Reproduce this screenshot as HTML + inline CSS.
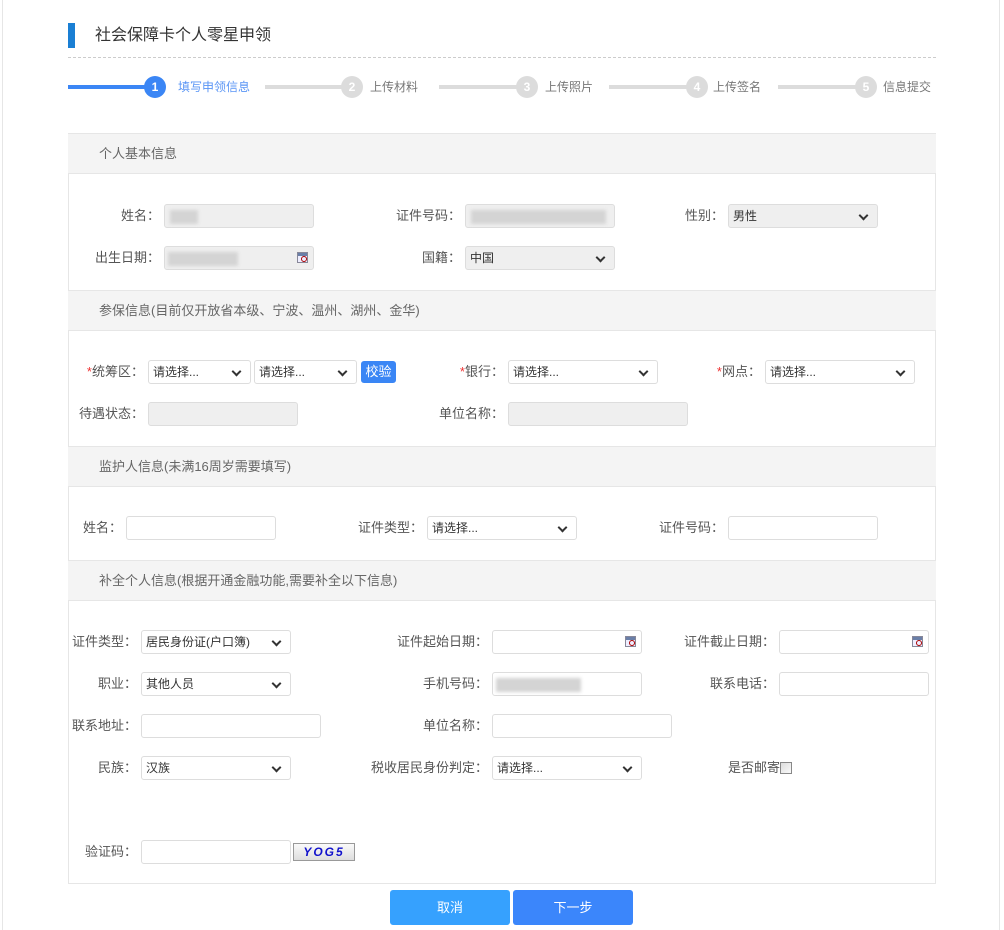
<!DOCTYPE html>
<html><head><meta charset="utf-8">
<style>
*{box-sizing:border-box;margin:0;padding:0}
body{width:1004px;height:930px;background:#fff;font-family:"Liberation Sans","Noto Sans CJK SC",sans-serif;color:#555;position:relative;overflow:hidden;font-size:13px}
.a{position:absolute}
.frame{left:2px;top:0;width:998px;height:930px;border-left:1px solid #e6e6e6;border-right:1px solid #e6e6e6}
.lb{position:absolute;text-align:right;font-size:13px;line-height:24px;color:#555;white-space:nowrap}
.in{position:absolute;height:24px;border:1px solid #ddd;border-radius:3px;background:#fff;font-size:12px;line-height:22px;padding-left:4px;color:#333}
.gr{background:#efefef}
.sel::after{content:"";position:absolute;right:10px;top:7px;width:5px;height:5px;border-right:2px solid #333;border-bottom:2px solid #333;transform:rotate(45deg)}
.cal::after{content:"";position:absolute;right:5px;top:5px;width:11px;height:11px;border:1px solid #889;background:linear-gradient(#6a7fa8 0 3px,#eef 3px);box-sizing:border-box}
.cal::before{content:"";position:absolute;right:6px;top:9px;width:4px;height:4px;border-radius:50%;border:1px solid #a00;z-index:2}
.sec{position:absolute;left:68px;width:868px;height:41px;background:#f4f4f4;border-top:1px solid #e6e6e6;border-bottom:1px solid #e6e6e6;font-size:13px;line-height:40px;padding-left:31px;color:#666}
.blur{position:absolute;height:14px;background:#d4d4d4;filter:blur(1.5px);top:5px}
.c{position:absolute;width:22px;height:22px;border-radius:50%;background:#dcdcdc;color:#fff;font-size:12px;font-weight:bold;text-align:center;line-height:22px;top:76px}
.sl{position:absolute;top:85px;height:4px;background:#dcdcdc}
.st{position:absolute;top:79px;font-size:12px;color:#777;line-height:16px}
.req{color:#e33}
</style></head><body>
<div class="a frame"></div>
<div class="a" style="left:68px;top:23px;width:7px;height:25px;background:#1a7fd4"></div>
<div class="a" style="left:95px;top:26px;font-size:16px;color:#333;line-height:20px">社会保障卡个人零星申领</div>
<div class="a" style="left:68px;top:57px;width:868px;border-top:1px dashed #ccc"></div>

<div class="sl" style="left:68px;width:90px;background:#3b86f5"></div>
<div class="c" style="left:144px;background:#3b86f5">1</div>
<div class="st" style="left:178px;color:#5a95f5">填写申领信息</div>
<div class="sl" style="left:265px;width:80px"></div>
<div class="c" style="left:341px">2</div>
<div class="st" style="left:370px">上传材料</div>
<div class="sl" style="left:439px;width:80px"></div>
<div class="c" style="left:516px">3</div>
<div class="st" style="left:545px">上传照片</div>
<div class="sl" style="left:609px;width:80px"></div>
<div class="c" style="left:686px">4</div>
<div class="st" style="left:713px">上传签名</div>
<div class="sl" style="left:778px;width:80px"></div>
<div class="c" style="left:855px">5</div>
<div class="st" style="left:883px">信息提交</div>

<div class="a" style="left:68px;top:133px;width:868px;height:751px;border:1px solid #e6e6e6"></div>
<div class="sec" style="top:133px">个人基本信息</div>
<div class="sec" style="top:290px">参保信息(目前仅开放省本级、宁波、温州、湖州、金华)</div>
<div class="sec" style="top:446px">监护人信息(未满16周岁需要填写)</div>
<div class="sec" style="top:560px">补全个人信息(根据开通金融功能,需要补全以下信息)</div>

<!-- row1 -->
<div class="lb" style="right:844px;top:204px">姓名：</div>
<div class="in gr" style="left:164px;top:204px;width:150px"><div class="blur" style="left:5px;width:28px"></div></div>
<div class="lb" style="right:543px;top:204px">证件号码：</div>
<div class="in gr" style="left:465px;top:204px;width:150px"><div class="blur" style="left:5px;width:135px"></div></div>
<div class="lb" style="right:280px;top:204px">性别：</div>
<div class="in gr sel" style="left:728px;top:204px;width:150px">男性</div>
<div class="lb" style="right:844px;top:246px">出生日期：</div>
<div class="in gr cal" style="left:164px;top:246px;width:150px"><div class="blur" style="left:3px;width:70px"></div></div>
<div class="lb" style="right:543px;top:246px">国籍：</div>
<div class="in gr sel" style="left:465px;top:246px;width:150px">中国</div>

<!-- insured -->
<div class="lb" style="right:860px;top:360px"><span class="req">*</span>统筹区：</div>
<div class="in sel" style="left:148px;top:360px;width:103px">请选择...</div>
<div class="in sel" style="left:254px;top:360px;width:103px">请选择...</div>
<div class="a" style="left:361px;top:361px;width:35px;height:22px;background:#3a86f5;border-radius:3px;color:#fff;font-size:13px;line-height:22px;text-align:center">校验</div>
<div class="lb" style="right:500px;top:360px"><span class="req">*</span>银行：</div>
<div class="in sel" style="left:508px;top:360px;width:150px">请选择...</div>
<div class="lb" style="right:243px;top:360px"><span class="req">*</span>网点：</div>
<div class="in sel" style="left:765px;top:360px;width:150px">请选择...</div>
<div class="lb" style="right:860px;top:402px">待遇状态：</div>
<div class="in gr" style="left:148px;top:402px;width:150px"></div>
<div class="lb" style="right:500px;top:402px">单位名称：</div>
<div class="in gr" style="left:508px;top:402px;width:180px"></div>

<!-- guardian -->
<div class="lb" style="right:882px;top:516px">姓名：</div>
<div class="in" style="left:126px;top:516px;width:150px"></div>
<div class="lb" style="right:581px;top:516px">证件类型：</div>
<div class="in sel" style="left:427px;top:516px;width:150px">请选择...</div>
<div class="lb" style="right:280px;top:516px">证件号码：</div>
<div class="in" style="left:728px;top:516px;width:150px"></div>

<!-- supplement -->
<div class="lb" style="right:867px;top:630px">证件类型：</div>
<div class="in sel" style="left:141px;top:630px;width:150px">居民身份证(户口簿)</div>
<div class="lb" style="right:516px;top:630px">证件起始日期：</div>
<div class="in cal" style="left:492px;top:630px;width:150px"></div>
<div class="lb" style="right:229px;top:630px">证件截止日期：</div>
<div class="in cal" style="left:779px;top:630px;width:150px"></div>

<div class="lb" style="right:867px;top:672px">职业：</div>
<div class="in sel" style="left:141px;top:672px;width:150px">其他人员</div>
<div class="lb" style="right:516px;top:672px">手机号码：</div>
<div class="in" style="left:492px;top:672px;width:150px"><div class="blur" style="left:3px;width:85px"></div></div>
<div class="lb" style="right:229px;top:672px">联系电话：</div>
<div class="in" style="left:779px;top:672px;width:150px"></div>

<div class="lb" style="right:867px;top:714px">联系地址：</div>
<div class="in" style="left:141px;top:714px;width:180px"></div>
<div class="lb" style="right:516px;top:714px">单位名称：</div>
<div class="in" style="left:492px;top:714px;width:180px"></div>

<div class="lb" style="right:867px;top:756px">民族：</div>
<div class="in sel" style="left:141px;top:756px;width:150px">汉族</div>
<div class="lb" style="right:516px;top:756px">税收居民身份判定：</div>
<div class="in sel" style="left:492px;top:756px;width:150px">请选择...</div>
<div class="lb" style="right:224px;top:756px">是否邮寄</div>
<div class="a" style="left:780px;top:762px;width:12px;height:12px;border:1px solid #888;background:linear-gradient(135deg,#ddd,#fafafa)"></div>

<div class="lb" style="right:867px;top:840px">验证码：</div>
<div class="in" style="left:141px;top:840px;width:150px"></div>
<div class="a" style="left:293px;top:843px;width:62px;height:18px;border:1px solid #999;background:linear-gradient(#fafafa,#ddd);color:#11c;font-style:italic;font-weight:bold;font-size:12px;letter-spacing:2px;text-align:center;line-height:16px">YOG5</div>

<div class="a" style="left:390px;top:890px;width:120px;height:35px;background:#36a1fe;border-radius:3px;color:#fff;font-size:13px;line-height:35px;text-align:center">取消</div>
<div class="a" style="left:513px;top:890px;width:120px;height:35px;background:#3b86fb;border-radius:3px;color:#fff;font-size:13px;line-height:35px;text-align:center">下一步</div>
</body></html>
